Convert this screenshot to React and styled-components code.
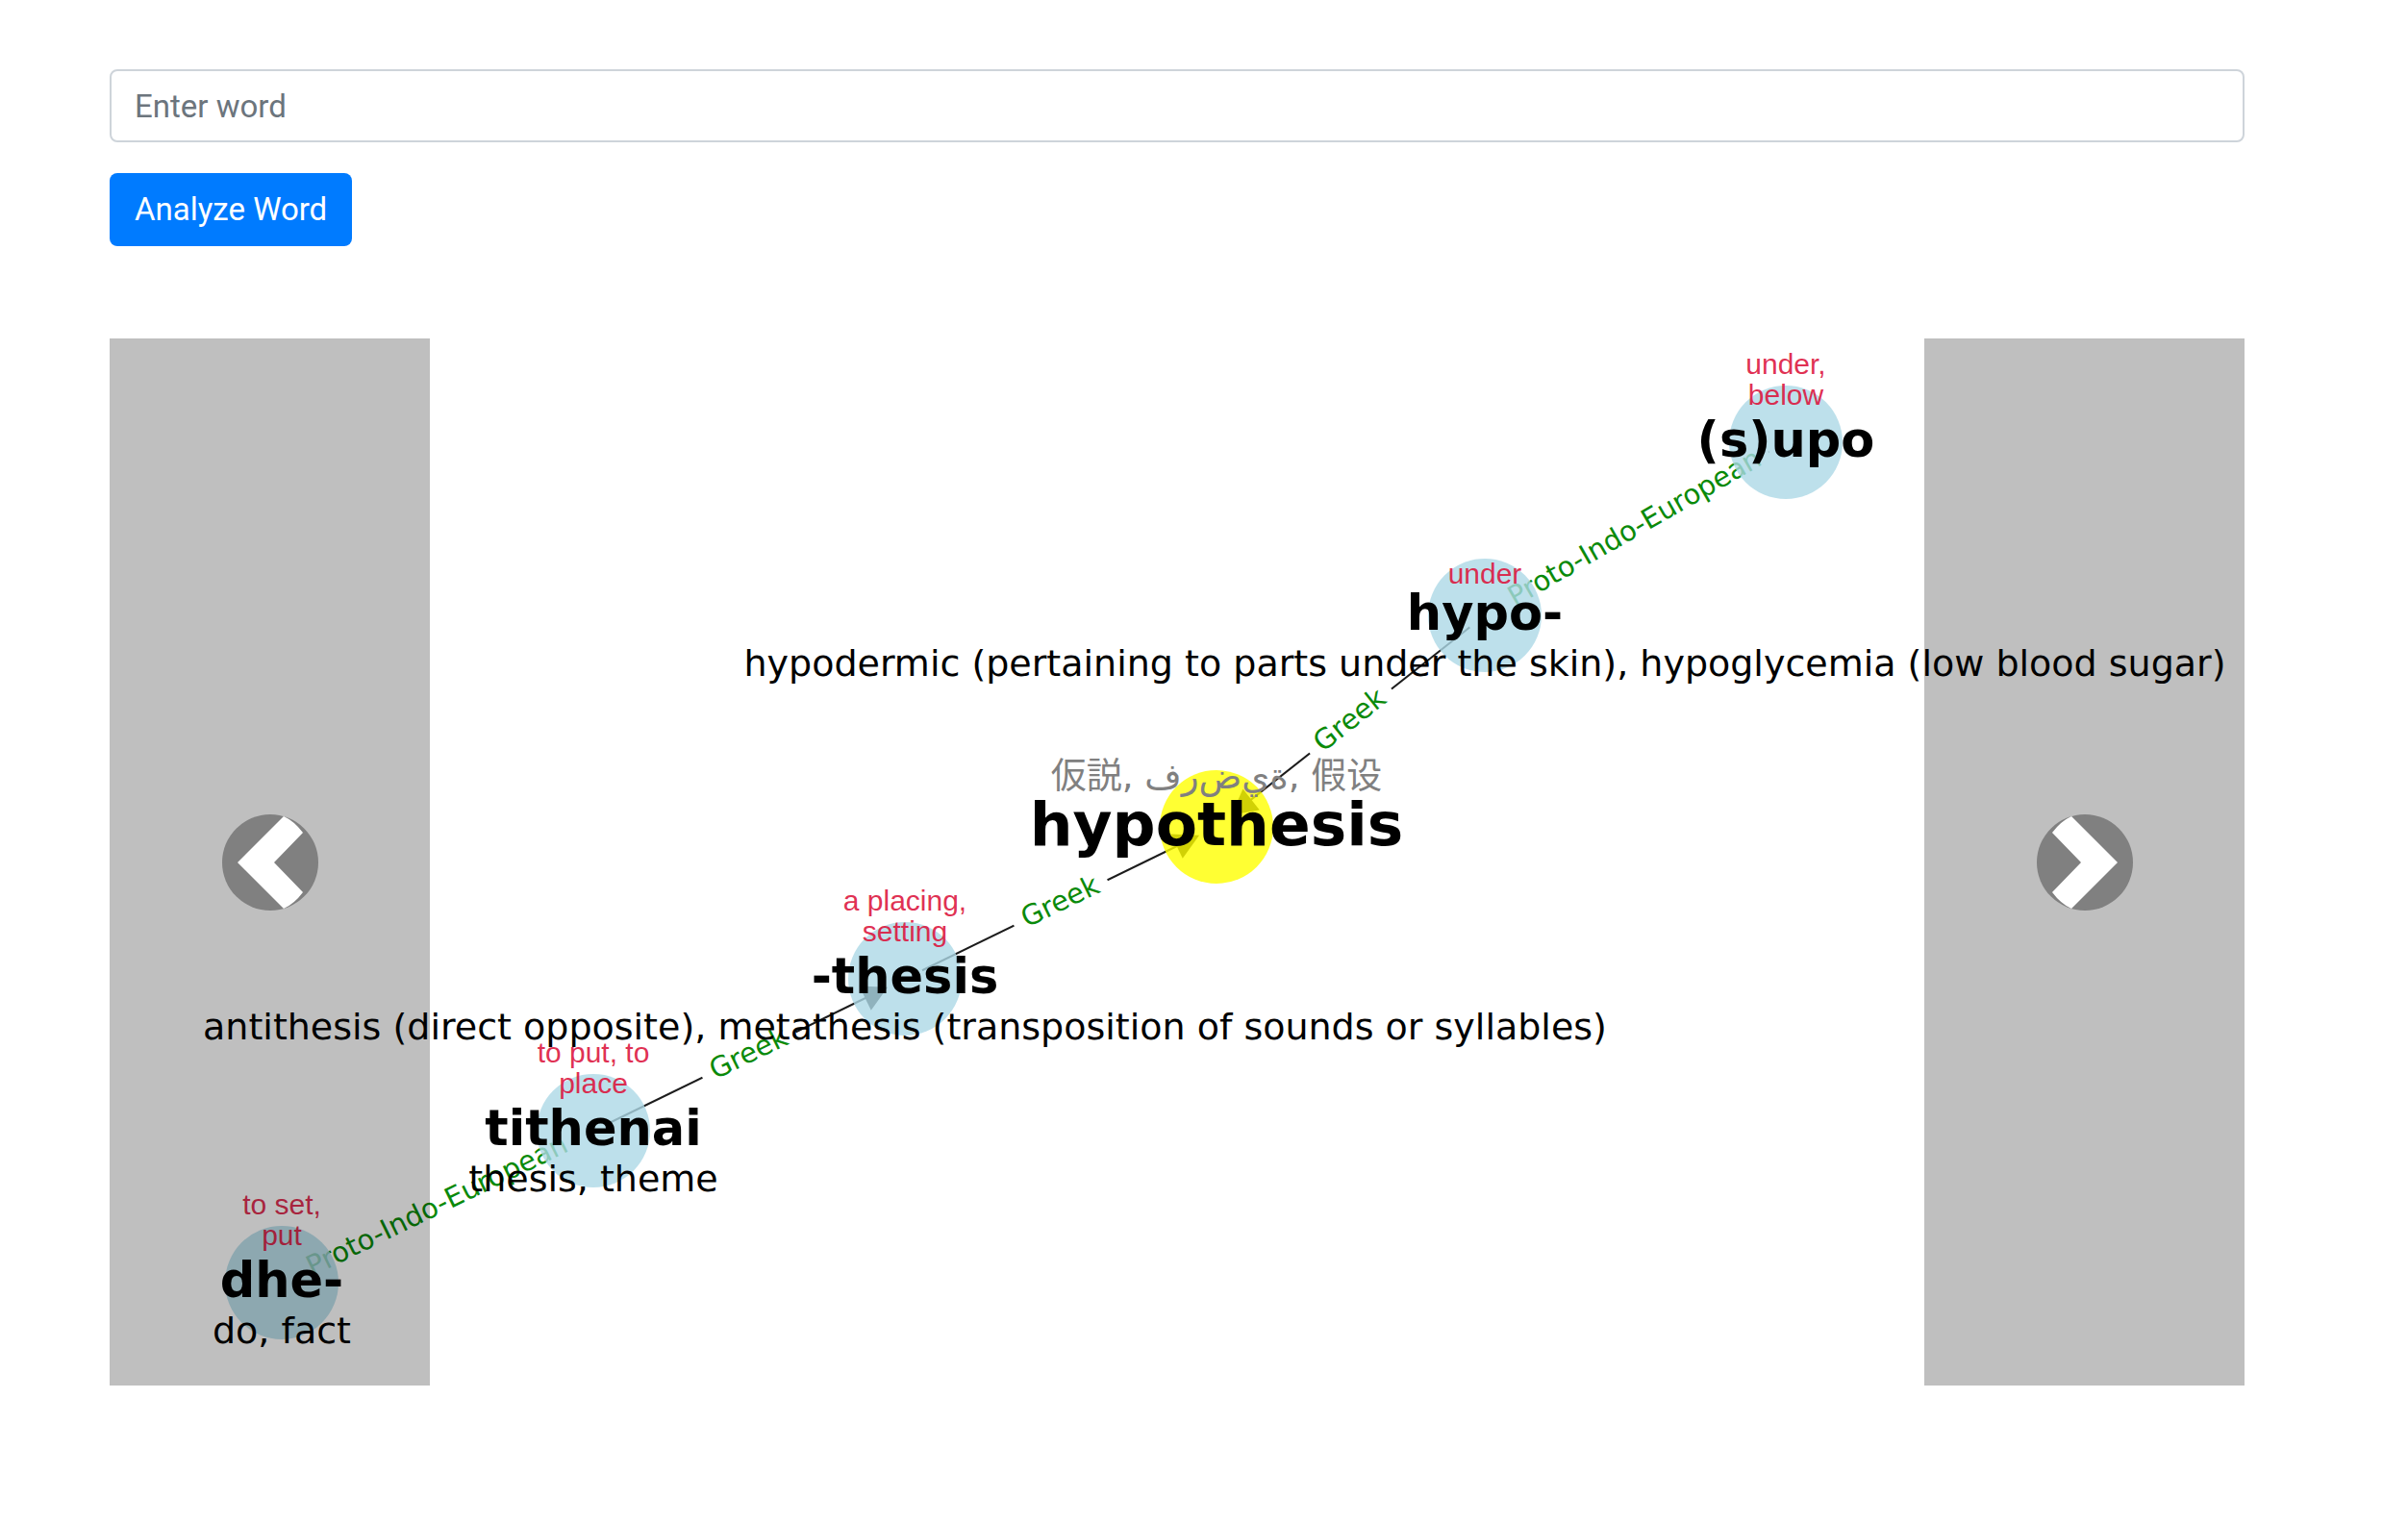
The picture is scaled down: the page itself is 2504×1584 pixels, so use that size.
import React from 'react';
import styled, { createGlobalStyle } from 'styled-components';

const GlobalStyle = createGlobalStyle`
  *, *::before, *::after { box-sizing: border-box; }
  body {
    margin: 0;
    background: #fff;
    color: #212529;
    font-family: Roboto, "Liberation Sans", sans-serif;
  }
`;

const Page = styled.main`
  padding: 72px 170px 0 114px;
`;

const Form = styled.form`
  display: flex;
  flex-direction: column;
  align-items: flex-start;
  gap: 32px;
  margin-bottom: 96px;
`;

const WordInput = styled.input`
  width: 100%;
  height: 76px;
  padding: 0 24px;
  border: 2px solid #ced4da;
  border-radius: 8px;
  background: #fff;
  color: #495057;
  font-family: inherit;
  font-size: 33px;
  line-height: 48px;

  &::placeholder {
    color: #6c757d;
    opacity: 1;
  }
`;

const AnalyzeButton = styled.button`
  height: 76px;
  padding: 0 26px;
  border: 0;
  border-radius: 8px;
  background: #007bff;
  color: #fff;
  font-family: inherit;
  font-size: 33px;
  line-height: 48px;
  cursor: pointer;
`;

const Carousel = styled.section`
  position: relative;
`;

const Diagram = styled.svg`
  display: block;
  width: 100%;
  height: auto;
  font-family: "DejaVu Sans", sans-serif;
  text-anchor: middle;
`;

const Edge = styled.line`
  stroke: #1c1c1c;
  stroke-width: 2px;
`;

const ArrowHead = styled.polygon`
  fill: #1c1c1c;
`;

const LabelGap = styled.rect`
  fill: #fff;
`;

const EdgeLabel = styled.text`
  fill: #0a8a0a;
  font-size: 29px;
`;

const NodeDisc = styled.circle`
  fill: ${(p) => (p.$root ? '#ffff00' : '#add8e6')};
  fill-opacity: 0.8;
`;

const Word = styled.text`
  fill: #000;
  font-size: ${(p) => (p.$root ? 63 : 51)}px;
  font-weight: 700;
`;

const Meaning = styled.text`
  fill: #dc143c;
  fill-opacity: 0.9;
  font-family: "Liberation Sans", Arial, sans-serif;
  font-size: 30px;
`;

const Related = styled.text`
  fill: #000;
  font-size: 38px;
`;

const Translations = styled.text`
  fill: #808080;
  font-family: "DejaVu Sans", "Noto Sans CJK JP", sans-serif;
  font-size: 37px;
  direction: ltr;
  unicode-bidi: bidi-override;
`;

const Control = styled.button`
  position: absolute;
  top: 0;
  bottom: 0;
  ${(p) => p.$side}: 0;
  display: flex;
  align-items: center;
  justify-content: center;
  width: 15%;
  padding: 0;
  border: 0;
  background: rgba(0, 0, 0, 0.25);
  cursor: pointer;
`;

const ControlIcon = styled.svg`
  width: 100px;
  height: 100px;
`;

const NODES = {
  supo: { x: 1743, y: 108, word: '(s)upo', meaning: ['under,', 'below'] },
  hypo: {
    x: 1430, y: 288, word: 'hypo-', meaning: ['under'],
    related: 'hypodermic (pertaining to parts under the skin), hypoglycemia (low blood sugar)',
  },
  hypothesis: { x: 1151, y: 508, word: 'hypothesis', root: true },
  thesis: {
    x: 827, y: 666, word: '-thesis', meaning: ['a placing,', 'setting'],
    related: 'antithesis (direct opposite), metathesis (transposition of sounds or syllables)',
  },
  tithenai: { x: 503, y: 824, word: 'tithenai', meaning: ['to put, to', 'place'], related: 'thesis, theme' },
  dhe: { x: 179, y: 982, word: 'dhe-', meaning: ['to set,', 'put'], related: 'do, fact' },
};

const EDGES = [
  { from: 'supo', to: 'hypo', label: 'Proto-Indo-European', gap: 320 },
  { from: 'hypo', to: 'hypothesis', label: 'Greek', gap: 108 },
  { from: 'thesis', to: 'hypothesis', label: 'Greek', gap: 108 },
  { from: 'tithenai', to: 'thesis', label: 'Greek', gap: 108 },
  { from: 'dhe', to: 'tithenai', label: 'Proto-Indo-European', gap: 320 },
];

function EdgeShape({ from, to, label, gap }) {
  const a = NODES[from];
  const b = NODES[to];
  const length = Math.hypot(b.x - a.x, b.y - a.y);
  const ux = (b.x - a.x) / length;
  const uy = (b.y - a.y) / length;
  const at = (along, across) =>
    [a.x + ux * along - uy * across, a.y + uy * along + ux * across];
  const [x1, y1] = at(20, 0);
  const [x2, y2] = at(length - 24, 0);
  const head = [at(length - 20, 0), at(length - 46, 14), at(length - 46, -14)];
  const [mx, my] = at(length / 2, 0);
  const angle = (Math.atan(uy / ux) * 180) / Math.PI;
  return (
    <g>
      <Edge x1={x1} y1={y1} x2={x2} y2={y2} />
      <ArrowHead points={head.map((p) => p.join(',')).join(' ')} />
      <g transform={`translate(${mx} ${my}) rotate(${angle})`}>
        <LabelGap x={-gap / 2} y={-20} width={gap} height={40} />
        <EdgeLabel y={8}>{label}</EdgeLabel>
      </g>
    </g>
  );
}

function NodeText({ x, y, word, root, meaning = [], related }) {
  const lastLine = meaning.length > 1 ? y - 39 : y - 33;
  return (
    <g>
      {meaning.map((line, i) => (
        <Meaning key={line} x={x} y={lastLine - (meaning.length - 1 - i) * 32}>{line}</Meaning>
      ))}
      <Word x={x} y={root ? y + 19 : y + 15} $root={root}>{word}</Word>
      {related && <Related x={x} y={y + 63}>{related}</Related>}
    </g>
  );
}

function EtymologyDiagram() {
  const nodes = Object.entries(NODES);
  return (
    <Diagram viewBox="0 0 2220 1089" role="img" aria-label="Etymology of hypothesis">
      {EDGES.map((e) => <EdgeShape key={e.from} {...e} />)}
      {nodes.map(([id, n]) => <NodeDisc key={id} cx={n.x} cy={n.y} r={59} $root={n.root} />)}
      <Translations x={1151} y={468}>{'仮説, ف\u200cر\u200cض\u200cي\u200cة, 假设'}</Translations>
      {nodes.map(([id, n]) => <NodeText key={id} {...n} />)}
    </Diagram>
  );
}

export default function App() {
  return (
    <>
      <GlobalStyle />
      <Page>
        <Form onSubmit={(e) => e.preventDefault()}>
          <WordInput type="text" placeholder="Enter word" aria-label="Enter word" />
          <AnalyzeButton type="submit">Analyze Word</AnalyzeButton>
        </Form>
        <Carousel aria-label="Word analysis">
          <EtymologyDiagram />
          <Control type="button" $side="left" aria-label="Previous">
            <ControlIcon viewBox="0 0 100 100" aria-hidden="true">
              <circle cx="50" cy="50" r="50" fill="#808080" />
              <path d="M16 50 64 2 Q75 7 84 19 L54 50 84 81 Q75 93 64 98Z" fill="#fff" />
            </ControlIcon>
          </Control>
          <Control type="button" $side="right" aria-label="Next">
            <ControlIcon viewBox="0 0 100 100" aria-hidden="true">
              <circle cx="50" cy="50" r="50" fill="#808080" />
              <path d="M84 50 36 2 Q25 7 16 19 L46 50 16 81 Q25 93 36 98Z" fill="#fff" />
            </ControlIcon>
          </Control>
        </Carousel>
      </Page>
    </>
  );
}
